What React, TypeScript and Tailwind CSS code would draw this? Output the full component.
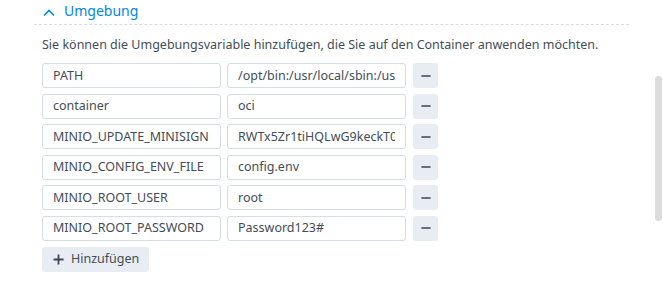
import { Minus } from "lucide-react";

const rows = [
  { key: "PATH", value: "/opt/bin:/usr/local/sbin:/usr/local/bin:/usr/sbin:/usr/bin:/sbin:/bin" },
  { key: "container", value: "oci" },
  { key: "MINIO_UPDATE_MINISIGN", value: "RWTx5Zr1tiHQLwG9keckT0c45M3AGeHD6IvimQHpyRywVWGbP1aVSGav" },
  { key: "MINIO_CONFIG_ENV_FILE", value: "config.env" },
  { key: "MINIO_ROOT_USER", value: "root" },
  { key: "MINIO_ROOT_PASSWORD", value: "Password123#" },
];

const font = { fontFamily: '"Noto Sans", "Open Sans", sans-serif' };

const Field = ({ text, className = "" }: { text: string; className?: string }) => (
  <div className={`w-[179px] h-[25px] flex items-center px-[10px] border border-[#d5dde7] rounded-[3px] ${className}`}>
    <span className="block w-full overflow-hidden whitespace-nowrap text-[12.5px] leading-[16px]">{text}</span>
  </div>
);

const App = () => {
  return (
    <div className="relative w-[663px] h-[282px] bg-white overflow-hidden text-[#434d57]" style={font}>
      <div className="ml-[34px] w-[595px] h-[25px] flex items-center border-b border-dashed border-[#d6dce3] pl-[9px]">
        <svg width="12" height="8" viewBox="0 0 12 8" className="mt-[1px]">
          <polyline points="1,6.5 6,1.5 11,6.5" fill="none" stroke="#0086e5" strokeWidth="1.6" />
        </svg>
        <span className="ml-[9px] text-[14px] leading-none text-[#0086e5] -mt-[2px]">Umgebung</span>
      </div>

      <p className="ml-[42px] mt-[12px] text-[12.5px] leading-[16px]">
        Sie können die Umgebungsvariable hinzufügen, die Sie auf den Container anwenden möchten.
      </p>

      <div className="ml-[42px] mt-[10px] flex flex-col gap-[5.6px]">
        {rows.map((row) => (
          <div className="flex items-center" key={row.key}>
            <Field text={row.key} />
            <Field text={row.value} className="ml-[6px]" />
            <button className="ml-[7px] w-[25px] h-[25px] flex items-center justify-center bg-[#e8edf3] rounded-[3px]">
              <Minus className="w-[14px] h-[14px] text-[#3d4752]" strokeWidth={2.4} />
            </button>
          </div>
        ))}
      </div>

      <button className="ml-[42px] mt-[6px] w-[107px] h-[25px] flex items-center pl-[11px] bg-[#e8edf3] rounded-[3px] text-[12.5px]">
        <svg width="11" height="11" viewBox="0 0 11 11">
          <path d="M5.5 0.5v10M0.5 5.5h10" stroke="#3d4752" strokeWidth="1.8" />
        </svg>
        <span className="ml-[7px]">Hinzufügen</span>
      </button>

      <div className="absolute left-[655px] top-[76px] w-[7px] h-[145px] rounded-full bg-[#dcdcdc]" />
    </div>
  );
};

export default App;
